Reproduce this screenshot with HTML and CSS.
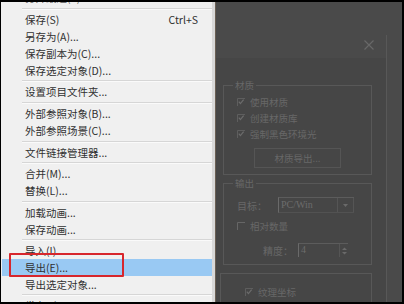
FILE: index.html
```html
<!DOCTYPE html>
<html lang="zh-CN">
<head>
<meta charset="utf-8">
<title>文件菜单</title>
<link rel="stylesheet" href="styles.css">
</head>
<body>
<div class="screen">
  <div class="menu">
    <div class="item partial-top"><span class="clip-top">打开最近(T)</span></div>
    <div class="sep s5"></div>
    <div class="item"><span>保存(S)</span><span class="key">Ctrl+S</span></div>
    <div class="item">另存为(A)...</div>
    <div class="item">保存副本为(C)...</div>
    <div class="item">保存选定对象(D)...</div>
    <div class="sep s4"></div>
    <div class="item">设置项目文件夹...</div>
    <div class="sep s5"></div>
    <div class="item">外部参照对象(B)...</div>
    <div class="item">外部参照场景(C)...</div>
    <div class="sep s5"></div>
    <div class="item">文件链接管理器...</div>
    <div class="sep s4"></div>
    <div class="item">合并(M)...</div>
    <div class="item">替换(L)...</div>
    <div class="sep s5"></div>
    <div class="item">加载动画...</div>
    <div class="item">保存动画...</div>
    <div class="sep s4"></div>
    <div class="item">导入(I)...</div>
    <div class="item active">导出(E)...</div>
    <div class="item">导出选定对象...</div>
    <div class="sep s4"></div>
    <div class="item">发布到 DWF...</div>
    <div class="annot"></div>
  </div>
  <div class="right">
    <div class="dialog">
      <div class="titlebar">
        <svg class="close" width="10" height="10" viewBox="0 0 10 10"><path d="M0.5 0.5L9.5 9.5M9.5 0.5L0.5 9.5" stroke="#686868" stroke-width="1.2" fill="none"/></svg>
      </div>
      <div class="body">
        <fieldset class="group g1">
          <legend>材质</legend>
          <div class="row"><svg class="cb" width="8" height="8" viewBox="0 0 8 8"><path d="M0.5 8V0.5H8" stroke="#5e5e5e" fill="none"/><path d="M1.8 3.6L3.4 5.6L6.6 1.6" stroke="#6c6c6c" stroke-width="1.2" fill="none"/></svg><span>使用材质</span></div>
          <div class="row"><svg class="cb" width="8" height="8" viewBox="0 0 8 8"><path d="M0.5 8V0.5H8" stroke="#5e5e5e" fill="none"/><path d="M1.8 3.6L3.4 5.6L6.6 1.6" stroke="#6c6c6c" stroke-width="1.2" fill="none"/></svg><span>创建材质库</span></div>
          <div class="row"><svg class="cb" width="8" height="8" viewBox="0 0 8 8"><path d="M0.5 8V0.5H8" stroke="#5e5e5e" fill="none"/><path d="M1.8 3.6L3.4 5.6L6.6 1.6" stroke="#6c6c6c" stroke-width="1.2" fill="none"/></svg><span>强制黑色环境光</span></div>
          <div class="btn">材质导出...</div>
        </fieldset>
        <fieldset class="group g2">
          <legend>输出</legend>
          <div class="row r-target"><span class="lbl">目标：</span>
            <div class="combo"><span class="val">PC/Win</span><span class="arrow"><svg width="5" height="3" viewBox="0 0 5 3"><path d="M0 0H5L2.5 3Z" fill="#6a6a6a"/></svg></span></div>
          </div>
          <div class="row r-rel"><svg class="cb" width="8" height="8" viewBox="0 0 8 8"><path d="M0.5 8V0.5H8" stroke="#666" fill="none"/></svg><span>相对数量</span></div>
          <div class="row r-prec"><span class="lbl">精度：</span>
            <div class="spin"><span class="val">4</span><span class="arrows"><svg width="5" height="10" viewBox="0 0 5 10"><path d="M0 4H5L2.5 1.5Z M0 6H5L2.5 8.5Z" fill="#6a6a6a"/></svg></span></div>
          </div>
        </fieldset>
        <div class="group3">
          <div class="row"><svg class="cb" width="8" height="8" viewBox="0 0 8 8"><path d="M0.5 8V0.5H8" stroke="#5e5e5e" fill="none"/><path d="M1.8 3.6L3.4 5.6L6.6 1.6" stroke="#6c6c6c" stroke-width="1.2" fill="none"/></svg><span>纹理坐标</span></div>
        </div>
      </div>
    </div>
  </div>
</div>
</body>
</html>
```
FILE: styles.css
```css
html, body {
  margin: 0;
  padding: 0;
  background: #000;
  width: 404px;
  height: 304px;
  overflow: hidden;
}
.screen {
  display: flex;
  width: 401px;
  height: 300px;
  margin: 2px 2px 2px 1px;
  overflow: hidden;
}
.menu {
  position: relative;
  width: 211px;
  flex: none;
  background: #f0f0f0;
  border-right: 3px solid #d8d8d8;
  font-family: "Noto Sans CJK SC", "Noto Sans", sans-serif;
  font-size: 10.5px;
  color: #303030;
  overflow: hidden;
}
.item {
  height: 17px;
  line-height: 17px;
  padding: 0 14px 0 24px;
  display: flex;
  justify-content: space-between;
  white-space: nowrap;
}
.item.partial-top {
  height: 4px;
  overflow: hidden;
}
.clip-top {
  display: block;
  margin-top: -13px;
  color: #555;
}
.item.active {
  background: #99c9f3;
  margin-left: 1px;
  padding-left: 23px;
}
.sep {
  box-sizing: border-box;
  padding-left: 21px;
}
.sep::before {
  content: "";
  display: block;
  height: 1px;
  background: #d6d6d6;
  border-bottom: 1px solid #fafafa;
}
.sep.s5 {
  height: 5px;
  padding-top: 2px;
}
.sep.s4 {
  height: 4px;
  padding-top: 1px;
}
.annot {
  position: absolute;
  left: 8px;
  top: 251px;
  width: 111px;
  height: 20px;
  border: 2px solid #d7262c;
  border-radius: 1px;
}
.right {
  flex: 1;
  background: #4a4a4a;
  border-left: 1px solid #6a5f54;
  overflow: hidden;
}
.dialog {
  width: 170px;
  height: 300px;
  margin-top: 33px;
  border-right: 1px solid #585858;
  font-family: "Noto Sans CJK SC", "Noto Sans", sans-serif;
  font-size: 9.5px;
  color: #686868;
}
.titlebar {
  height: 23px;
  box-sizing: border-box;
  display: flex;
  justify-content: flex-end;
  align-items: flex-start;
  padding: 5px 12px 0 0;
}
.close {
  display: block;
}
.body {
  background: #464646;
  height: 260px;
  padding: 20px 14px 0 7px;
  box-sizing: border-box;
}
.group {
  margin: 0;
  border: 1px solid #585858;
  padding: 2px 12px 6px 13px;
  min-width: 0;
}
.group legend {
  padding: 0 2px;
  margin-left: -4px;
  height: 14px;
  line-height: 14px;
}
.g2 {
  margin-top: 1px;
  padding-top: 7px;
  padding-bottom: 7px;
}
.row {
  display: flex;
  align-items: center;
  height: 16px;
  gap: 5px;
  white-space: nowrap;
}
.cb {
  display: block;
  flex: none;
}
.btn {
  margin: 6px 0 0 17px;
  width: 87px;
  height: 20px;
  box-sizing: border-box;
  border: 1px solid #555;
  line-height: 18px;
  text-align: center;
}
.r-target {
  gap: 0;
}
.r-target .lbl {
  width: 41px;
  font-size: 10px;
}
.combo {
  display: flex;
  width: 76px;
  height: 16px;
  box-sizing: border-box;
  border-left: 1px solid #6a6a6a;
  border-top: 1px solid #5c5c5c;
  border-bottom: 1px solid #525252;
}
.val {
  flex: 1;
  padding-left: 2px;
  font-family: "Liberation Serif", "DejaVu Serif", serif;
  font-size: 10px;
  line-height: 14px;
  color: #6c6c6c;
}
.arrow {
  width: 15px;
  border-left: 1px solid #555;
  border-right: 1px solid #555;
  display: flex;
  align-items: center;
  justify-content: center;
}
.r-rel {
  margin-top: 5px;
}
.r-prec {
  margin-top: 9px;
  height: 14px;
  gap: 0;
  padding-left: 26px;
}
.r-prec .lbl {
  width: 35px;
  font-size: 10px;
}
.spin {
  display: flex;
  width: 50px;
  height: 14px;
  box-sizing: border-box;
  border-left: 1px solid #6a6a6a;
  border-top: 1px solid #5c5c5c;
}
.spin .val {
  line-height: 12px;
}
.arrows {
  width: 8px;
  display: flex;
  align-items: center;
  justify-content: center;
  border-left: 1px solid #555;
}
.group3 {
  margin: 8px 0 0 -3px;
  border: 1px solid #585858;
  border-bottom: none;
  height: 40px;
  padding: 10px 0 0 24px;
}
```
